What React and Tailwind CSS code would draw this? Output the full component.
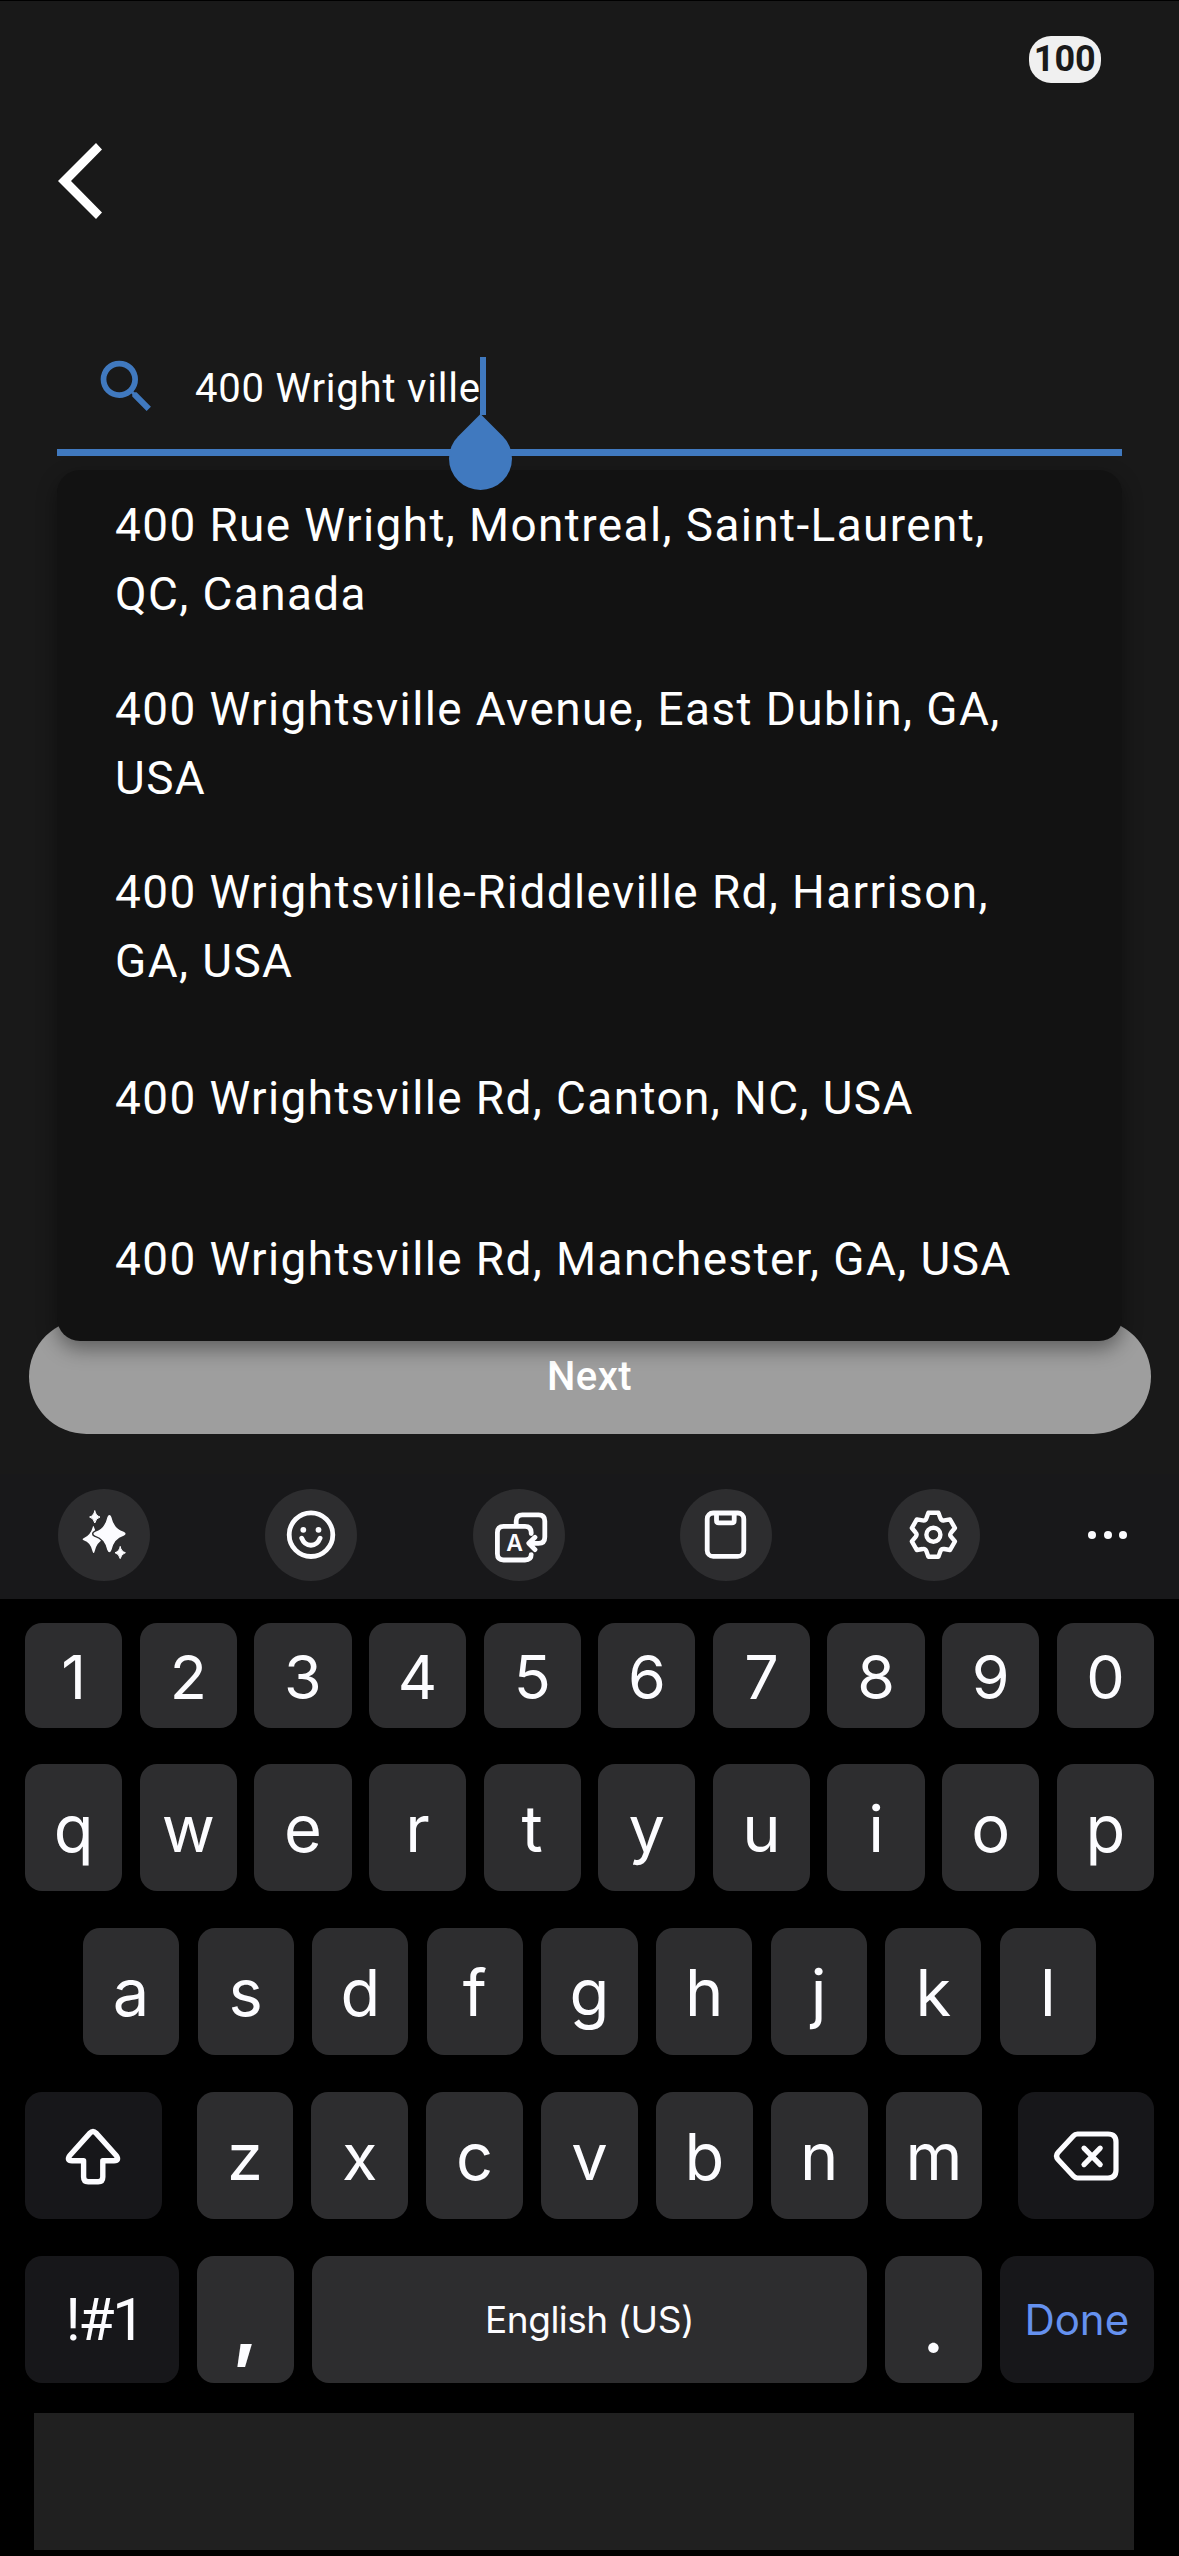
import React from 'react'
import { MdSearch } from 'react-icons/md'

const suggestions = [
  '400 Rue Wright, Montreal, Saint-Laurent, QC, Canada',
  '400 Wrightsville Avenue, East Dublin, GA, USA',
  '400 Wrightsville-Riddleville Rd, Harrison, GA, USA',
  '400 Wrightsville Rd, Canton, NC, USA',
  '400 Wrightsville Rd, Manchester, GA, USA'
]

const numberRow = ['1', '2', '3', '4', '5', '6', '7', '8', '9', '0']
const topRow = ['q', 'w', 'e', 'r', 't', 'y', 'u', 'i', 'o', 'p']
const homeRow = ['a', 's', 'd', 'f', 'g', 'h', 'j', 'k', 'l']
const bottomRow = ['z', 'x', 'c', 'v', 'b', 'n', 'm']

const gearPath = () => {
  const tooth = [[-5, -22], [5, -22], [7, -16.5], [8.2, -13.6], [10.78, -14.31]]
  let d = ''
  for (let i = 0; i < 6; i++) {
    const a = (i * Math.PI) / 3
    const p = tooth.map(([x, y]) =>
      `${(x * Math.cos(a) - y * Math.sin(a)).toFixed(2)} ${(x * Math.sin(a) + y * Math.cos(a)).toFixed(2)}`
    )
    d += `${i === 0 ? 'M' : 'L'}${p[0]}L${p[1]}L${p[2]}Q${p[3]} ${p[4]}`
  }
  return d + 'Z'
}

function ToolButton({ children }) {
  return (
    <button type="button" className="size-[92px] shrink-0 rounded-full bg-[#2d2d2f]">
      <svg viewBox="0 0 92 92" className="size-full" fill="none" stroke="#fcfcff" strokeWidth="4.8" strokeLinecap="round" strokeLinejoin="round">
        {children}
      </svg>
    </button>
  )
}

function Key({ label, className = '', textClass = 'text-[65px] pt-px' }) {
  return (
    <button
      type="button"
      className={`flex h-full items-center justify-center rounded-[17px] bg-[#2d2d2f] text-[#fcfcff] ${className}`}
    >
      <span className={`leading-none ${textClass}`}>{label}</span>
    </button>
  )
}

function Keyboard() {
  return (
    <div className="flex flex-col bg-black font-['Inter',sans-serif]">
      <div className="flex h-[125px] items-center bg-[#18181a] pb-[3px] pl-[57.5px]">
        <div className="flex gap-[115.5px]">
          <ToolButton>
            <g fill="#fcfcff" stroke="none">
              <path d="M35.8 37.4Q38.6 47.4 46 50.3Q38.6 53.2 36.6 62.5Q35.6 65.5 34.6 62.5Q32.6 53.2 25.6 51.2Q23.6 50.3 25.6 49.2Q32.5 46.4 34.6 38.5Q35.2 36.4 35.8 37.4Z" />
              <path stroke="#2d2d2f" strokeWidth="4.4" d="M50 28.6Q51.4 25 52.8 28.6Q55.4 40.4 65.4 43.4Q68.4 44.7 65.4 46Q55.4 49 52.8 60.8Q51.4 64.4 50 60.8Q47.4 49 37.6 46Q34.6 44.7 37.6 43.4Q47.4 40.4 50 28.6Z" />
              <path stroke="#fcfcff" strokeWidth="1.4" d="M50 28.6Q51.4 25 52.8 28.6Q55.4 40.4 65.4 43.4Q68.4 44.7 65.4 46Q55.4 49 52.8 60.8Q51.4 64.4 50 60.8Q47.4 49 37.6 46Q34.6 44.7 37.6 43.4Q47.4 40.4 50 28.6Z" />
              <path d="M36.8 22Q37.9 26.9 42 28Q37.9 29.1 36.8 34Q35.7 29.1 31.6 28Q35.7 26.9 36.8 22Z" stroke="#fcfcff" strokeWidth="1" />
              <path d="M62.2 57.8Q63.3 62.6 67.4 63.7Q63.3 64.8 62.2 69.6Q61.1 64.8 57 63.7Q61.1 62.6 62.2 57.8Z" stroke="#fcfcff" strokeWidth="1" />
            </g>
          </ToolButton>
          <ToolButton>
            <circle cx="46" cy="45.7" r="21.8" />
            <circle cx="38.3" cy="40.8" r="2.9" fill="#fcfcff" stroke="none" />
            <circle cx="53.5" cy="40.8" r="2.9" fill="#fcfcff" stroke="none" />
            <path d="M36.7 49.2C40.4 58.6 51.4 58.6 55.1 49.2" />
          </ToolButton>
          <ToolButton>
            <path d="M43.2 36V32Q43.2 25.8 49.4 25.8H65.6Q71.8 25.8 71.8 32V48Q71.8 54.3 65.6 54.3H56M62 48.3L55.8 54.3L62 60.6" />
            <path d="M58.2 44.5V43.6Q58.2 37.4 52 37.4H30.6Q24.4 37.4 24.4 43.6V64.8Q24.4 71 30.6 71H52Q58.2 71 58.2 65.6" />
            <text x="41.6" y="62.4" textAnchor="middle" fontSize="23" fontWeight="600" fill="#fcfcff" stroke="none">A</text>
          </ToolButton>
          <ToolButton>
            <rect x="27.2" y="24" width="36.6" height="43.4" rx="6" />
            <path d="M36.5 25V31.5Q36.5 33.8 38.8 33.8H51.9Q54.2 33.8 54.2 31.5V25" />
          </ToolButton>
          <ToolButton>
            <g transform="translate(45.4 45.7)" strokeWidth="4.4">
              <path d={gearPath()} />
              <circle r="7" />
            </g>
          </ToolButton>
        </div>
        <div className="ml-[108.5px] flex gap-[7.5px]">
          <span className="size-2 rounded-full bg-[#fcfcff]" />
          <span className="size-2 rounded-full bg-[#fcfcff]" />
          <span className="size-2 rounded-full bg-[#fcfcff]" />
        </div>
      </div>

      <div className="flex flex-col gap-[36.8px] px-[25px] pt-[23.7px]">
        <div className="grid h-[105px] grid-cols-10 gap-[17.4px]">
          {numberRow.map((k) => (
            <Key key={k} label={k} textClass="text-[61px] pt-[5px]" />
          ))}
        </div>
        <div className="grid h-[127px] grid-cols-10 gap-[17.4px]">
          {topRow.map((k) => (
            <Key key={k} label={k} />
          ))}
        </div>
        <div className="grid h-[127px] grid-cols-9 gap-[18.4px] px-[58px]">
          {homeRow.map((k) => (
            <Key key={k} label={k} />
          ))}
        </div>
        <div className="flex h-[127px] justify-between">
          <button type="button" className="flex w-[136.5px] items-center justify-center rounded-[17px] bg-[#17171a]">
            <svg viewBox="0 0 60 60" className="size-[60px]" fill="none" stroke="#fcfcff" strokeWidth="5.4" strokeLinejoin="round">
              <path d="M26.9 7.1Q30 3.8 33.1 7.1L53.2 29.5Q56.8 34.8 51 34.8H39.8V51Q39.8 55.8 35.2 55.8H25.2Q20.6 55.8 20.6 51V34.8H9Q3.2 34.8 6.8 29.5Z" />
            </svg>
          </button>
          <div className="grid w-[786px] grid-cols-7 gap-[18px]">
            {bottomRow.map((k) => (
              <Key key={k} label={k} />
            ))}
          </div>
          <button type="button" className="flex w-[136.5px] items-center justify-center rounded-[17px] bg-[#17171a]">
            <svg viewBox="0 0 70 54" className="h-[54px] w-[70px]" fill="none" stroke="#fcfcff" strokeWidth="5.2" strokeLinecap="round" strokeLinejoin="round">
              <path d="M26.5 5H57Q65 5 65 13V41Q65 49 57 49H26.5Q24 49 22.3 47L7 30.5Q4 27 7 23.5L22.3 7Q24 5 26.5 5Z" />
              <path d="M33 19.2L49.2 35.6M49.2 19.2L33 35.6" />
            </svg>
          </button>
        </div>
        <div className="flex h-[127px] gap-[18px]">
          <Key label="!#1" className="w-[154.5px] bg-[#17171a]!" textClass="font-['Roboto',sans-serif] text-[59px] tracking-[-2.5px] pl-[4px] pt-px" />
          <Key label="," className="w-[96.5px]" textClass="text-[76px] pt-[9px] font-bold" />
          <Key label="English (US)" className="w-[555.5px]" textClass="text-[37px] tracking-[-0.5px]" />
          <Key label="." className="w-[96.5px]" textClass="text-[72px] pt-[14px] font-medium" />
          <Key label="Done" className="w-[154.5px] bg-[#17171a]! text-[#6591ef]!" textClass="text-[42px] pt-[2px]" />
        </div>
      </div>

      <div className="mt-[30px] mr-[45px] ml-[34px] h-[137px] bg-[#202020]" />
    </div>
  )
}

export default function App() {
  return (
    <div className="h-[2556px] w-[1179px] overflow-hidden bg-black pt-px font-['Roboto',sans-serif]">
      <div className="h-[1473px] bg-[#191919] text-white">
        <div className="flex h-[142px] justify-end pt-[35px] pr-[78px]">
          <div className="flex h-[47px] w-[72.5px] items-center justify-center rounded-[22px] bg-[#f0f0f0] pb-px text-[36px] leading-none font-bold text-[#1a1a1a]">
            100
          </div>
        </div>

        <button type="button" className="ml-[58px] block h-[76px] w-[44px]">
          <svg viewBox="0 0 44 76" className="size-full" fill="#fff">
            <path d="M38 0L44 6.6L13 38L44 69.4L38 76L0 38Z" />
          </svg>
        </button>

        <div className="relative mx-[57px] mt-[123px] flex h-[114px] items-start border-b-[7px] border-[#4079bf]">
          <MdSearch className="mt-[9.5px] ml-[35px] size-[69px] text-[#4079bf]" />
          <span className="mt-[24px] ml-[34px] text-[40.1px] leading-[46px] tracking-[0.76px] whitespace-nowrap">400 Wright ville</span>
          <span className="absolute top-[15px] left-[423px] h-[58px] w-[6px] bg-[#4079bf]" />
          {/* cursor handle */}
          <span className="absolute top-[85px] left-[392px] z-10 size-[63px] rotate-45 rounded-full rounded-tl-none bg-[#4079bf]" />
        </div>

        <div className="relative mx-[57px] mt-[14px] h-[871px] rounded-[23px] bg-[#121212] shadow-[0_8px_20px_rgba(0,0,0,0.4)]">
          {suggestions.map((s) => (
            <div key={s} className="flex min-h-[160.5px] items-center px-[58px] pt-[21.4px] pb-[24.4px]">
              <p className="text-[45.9px] leading-[68.8px] tracking-[1.41px]">{s}</p>
            </div>
          ))}
        </div>

        <button
          type="button"
          className="mx-auto -mt-[22px] flex h-[114.5px] w-[1122px] items-center justify-center rounded-full bg-[#9e9e9e] pt-[2px] text-[40px] font-medium tracking-[0.4px]"
        >
          Next
        </button>
      </div>
      <Keyboard />
    </div>
  )
}
